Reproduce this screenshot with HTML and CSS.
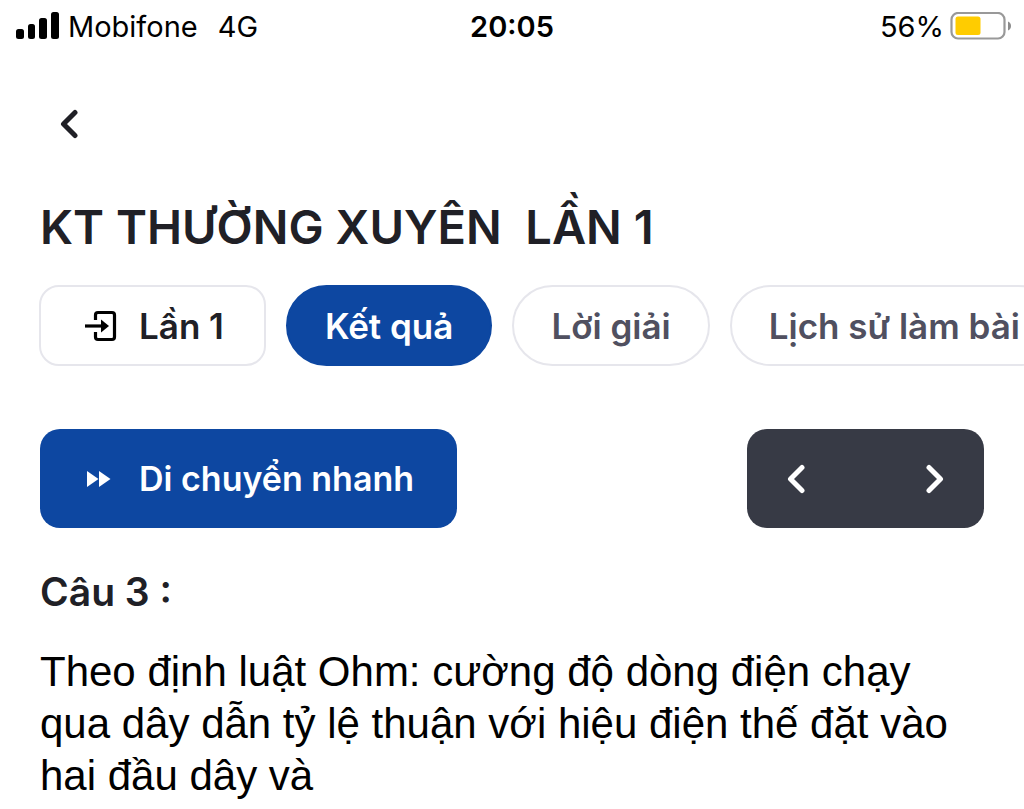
FILE: index.html
```html
<!DOCTYPE html>
<html lang="vi">
<head>
    <meta charset="utf-8">
    <title>KT THƯỜNG XUYÊN LẦN 1</title>
    <meta name="viewport" content="width=device-width, initial-scale=1.0">
    <link rel="stylesheet" href="styles.css">
</head>
<body>
    <div class="status-bar">
        <div class="carrier">
            <svg width="44" height="28" viewBox="0 0 44 28" aria-hidden="true">
                <rect x="0" y="17" width="8" height="10" rx="2.5"/>
                <rect x="12" y="12" width="7" height="15" rx="2.5"/>
                <rect x="23" y="6" width="8" height="21" rx="2.5"/>
                <rect x="35" y="0" width="8" height="27" rx="2.5"/>
            </svg>
            <span>Mobifone</span>
            <span class="network">4G</span>
        </div>
        <div class="clock">20:05</div>
        <div class="battery">
            <span>56%</span>
            <svg width="62" height="28" viewBox="0 0 62 28" aria-hidden="true">
                <rect x="1.5" y="1" width="53" height="25.500" rx="6.500" fill="#fff" stroke="#999" stroke-width="2.200"/>
                <rect x="5.500" y="4.500" width="25" height="18.500" rx="2.500" fill="#fc0"/>
                <path d="M58 9.500c4 1.500 4 7.500 0 9z" fill="#8c8c8c"/>
            </svg>
        </div>
    </div>

    <main>
        <button class="back" aria-label="Quay lại">
            <svg width="20" height="30" viewBox="0 0 20 30"><path d="M15 3.500 3.500 15 15 26.500"/></svg>
        </button>

        <h1>KT THƯỜNG XUYÊN&nbsp; LẦN 1</h1>

        <nav class="tabs">
            <button class="tab attempt">
                <svg width="32" height="32" viewBox="0 0 32 32" aria-hidden="true">
                    <path d="M10.500 10V5q0-2.500 2.500-2.500h14q2.500 0 2.500 2.500v22q0 2.500-2.500 2.500H13q-2.500 0-2.500-2.500v-5" fill="none" stroke="#000" stroke-width="3.200"/>
                    <path d="M0 16h17" fill="none" stroke="#000" stroke-width="3.200"/>
                    <path d="M16 9.500 24 16l-8 6.500z"/>
                </svg>
                Lần 1
            </button>
            <button class="tab active">Kết quả</button>
            <button class="tab">Lời giải</button>
            <button class="tab">Lịch sử làm bài</button>
        </nav>

        <div class="actions">
            <button class="jump">
                <svg width="24" height="18" viewBox="0 0 24 18" aria-hidden="true">
                    <path d="M0 1v16l11.500-8zM12 1v16l11.500-8z" fill="#fff"/>
                </svg>
                Di chuyển nhanh
            </button>
            <div class="pager">
                <button aria-label="Câu trước">
                    <svg width="20" height="30" viewBox="0 0 20 30"><path d="M15 3.500 3.500 15 15 26.500"/></svg>
                </button>
                <button aria-label="Câu sau">
                    <svg width="20" height="30" viewBox="0 0 20 30"><path d="M5 3.500 16.500 15 5 26.500"/></svg>
                </button>
            </div>
        </div>

        <h2>Câu 3 :</h2>
        <p class="question">Theo định luật Ohm: cường độ dòng điện chạy qua dây dẫn tỷ lệ thuận với hiệu điện thế đặt vào hai đầu dây và</p>
    </main>
</body>
</html>
```
FILE: styles.css
```css
* { box-sizing: border-box; }
body { margin: 0; background: #fff; color: #202026; font-family: Inter, sans-serif; overflow-x: hidden; }
button { font: inherit; color: inherit; background: none; border: 0; padding: 0; cursor: pointer; }
svg { display: block; flex: none; }

/* phone status bar */
.status-bar { display: grid; grid-template-columns: 1fr auto 1fr; align-items: center; height: 52px; padding: 0 12px; color: #000; font-size: 29px; }
.carrier, .battery { display: flex; align-items: center; gap: 8px; }
.carrier { padding-left: 4px; }
.network { margin-left: 12px; }
.clock { font-weight: 600; }
.battery { justify-content: flex-end; gap: 6px; }

main { padding: 44px 40px 0; }
.back { display: flex; align-items: center; justify-content: center; width: 60px; height: 56px; }
.back path, .pager path { fill: none; stroke: currentColor; stroke-width: 5; stroke-linecap: round; stroke-linejoin: round; }

h1 { margin: 47px 0 0; font-size: 47px; line-height: 56px; font-weight: 600; }

.tabs { display: flex; gap: 20px; margin: 30px -40px 0 -1px; overflow: hidden; font-size: 35px; font-weight: 600; }
.tab { flex: none; height: 81px; padding: 0 37px; border: 2px solid #e6e6ec; border-radius: 41px; color: #505060; white-space: nowrap; }
.tab.attempt { display: flex; align-items: center; gap: 22px; padding: 0 40px 0 44px; border-radius: 20px; color: #202026; }
.tab.active { background: #0d47a1; border-color: #0d47a1; color: #fff; }

.actions { display: flex; justify-content: space-between; margin-top: 63px; }
.jump { display: flex; align-items: center; gap: 28px; height: 99px; padding: 0 43px 0 47px; border-radius: 20px; background: #0d47a1; color: #fff; font-size: 34px; font-weight: 600; }
.pager { display: flex; width: 237px; height: 99px; border-radius: 20px; background: #373a45; color: #fff; }
.pager button { display: flex; flex: 1; align-items: center; justify-content: flex-start; padding: 0 40px; }
.pager button:last-child { justify-content: flex-end; }

h2 { margin: 40px 0 0; font-size: 39px; line-height: 48px; font-weight: 600; }
.question { margin: 30px 0 0; color: #000; font-family: "Liberation Sans", Arial, sans-serif; font-size: 42px; line-height: 52px; }
```
